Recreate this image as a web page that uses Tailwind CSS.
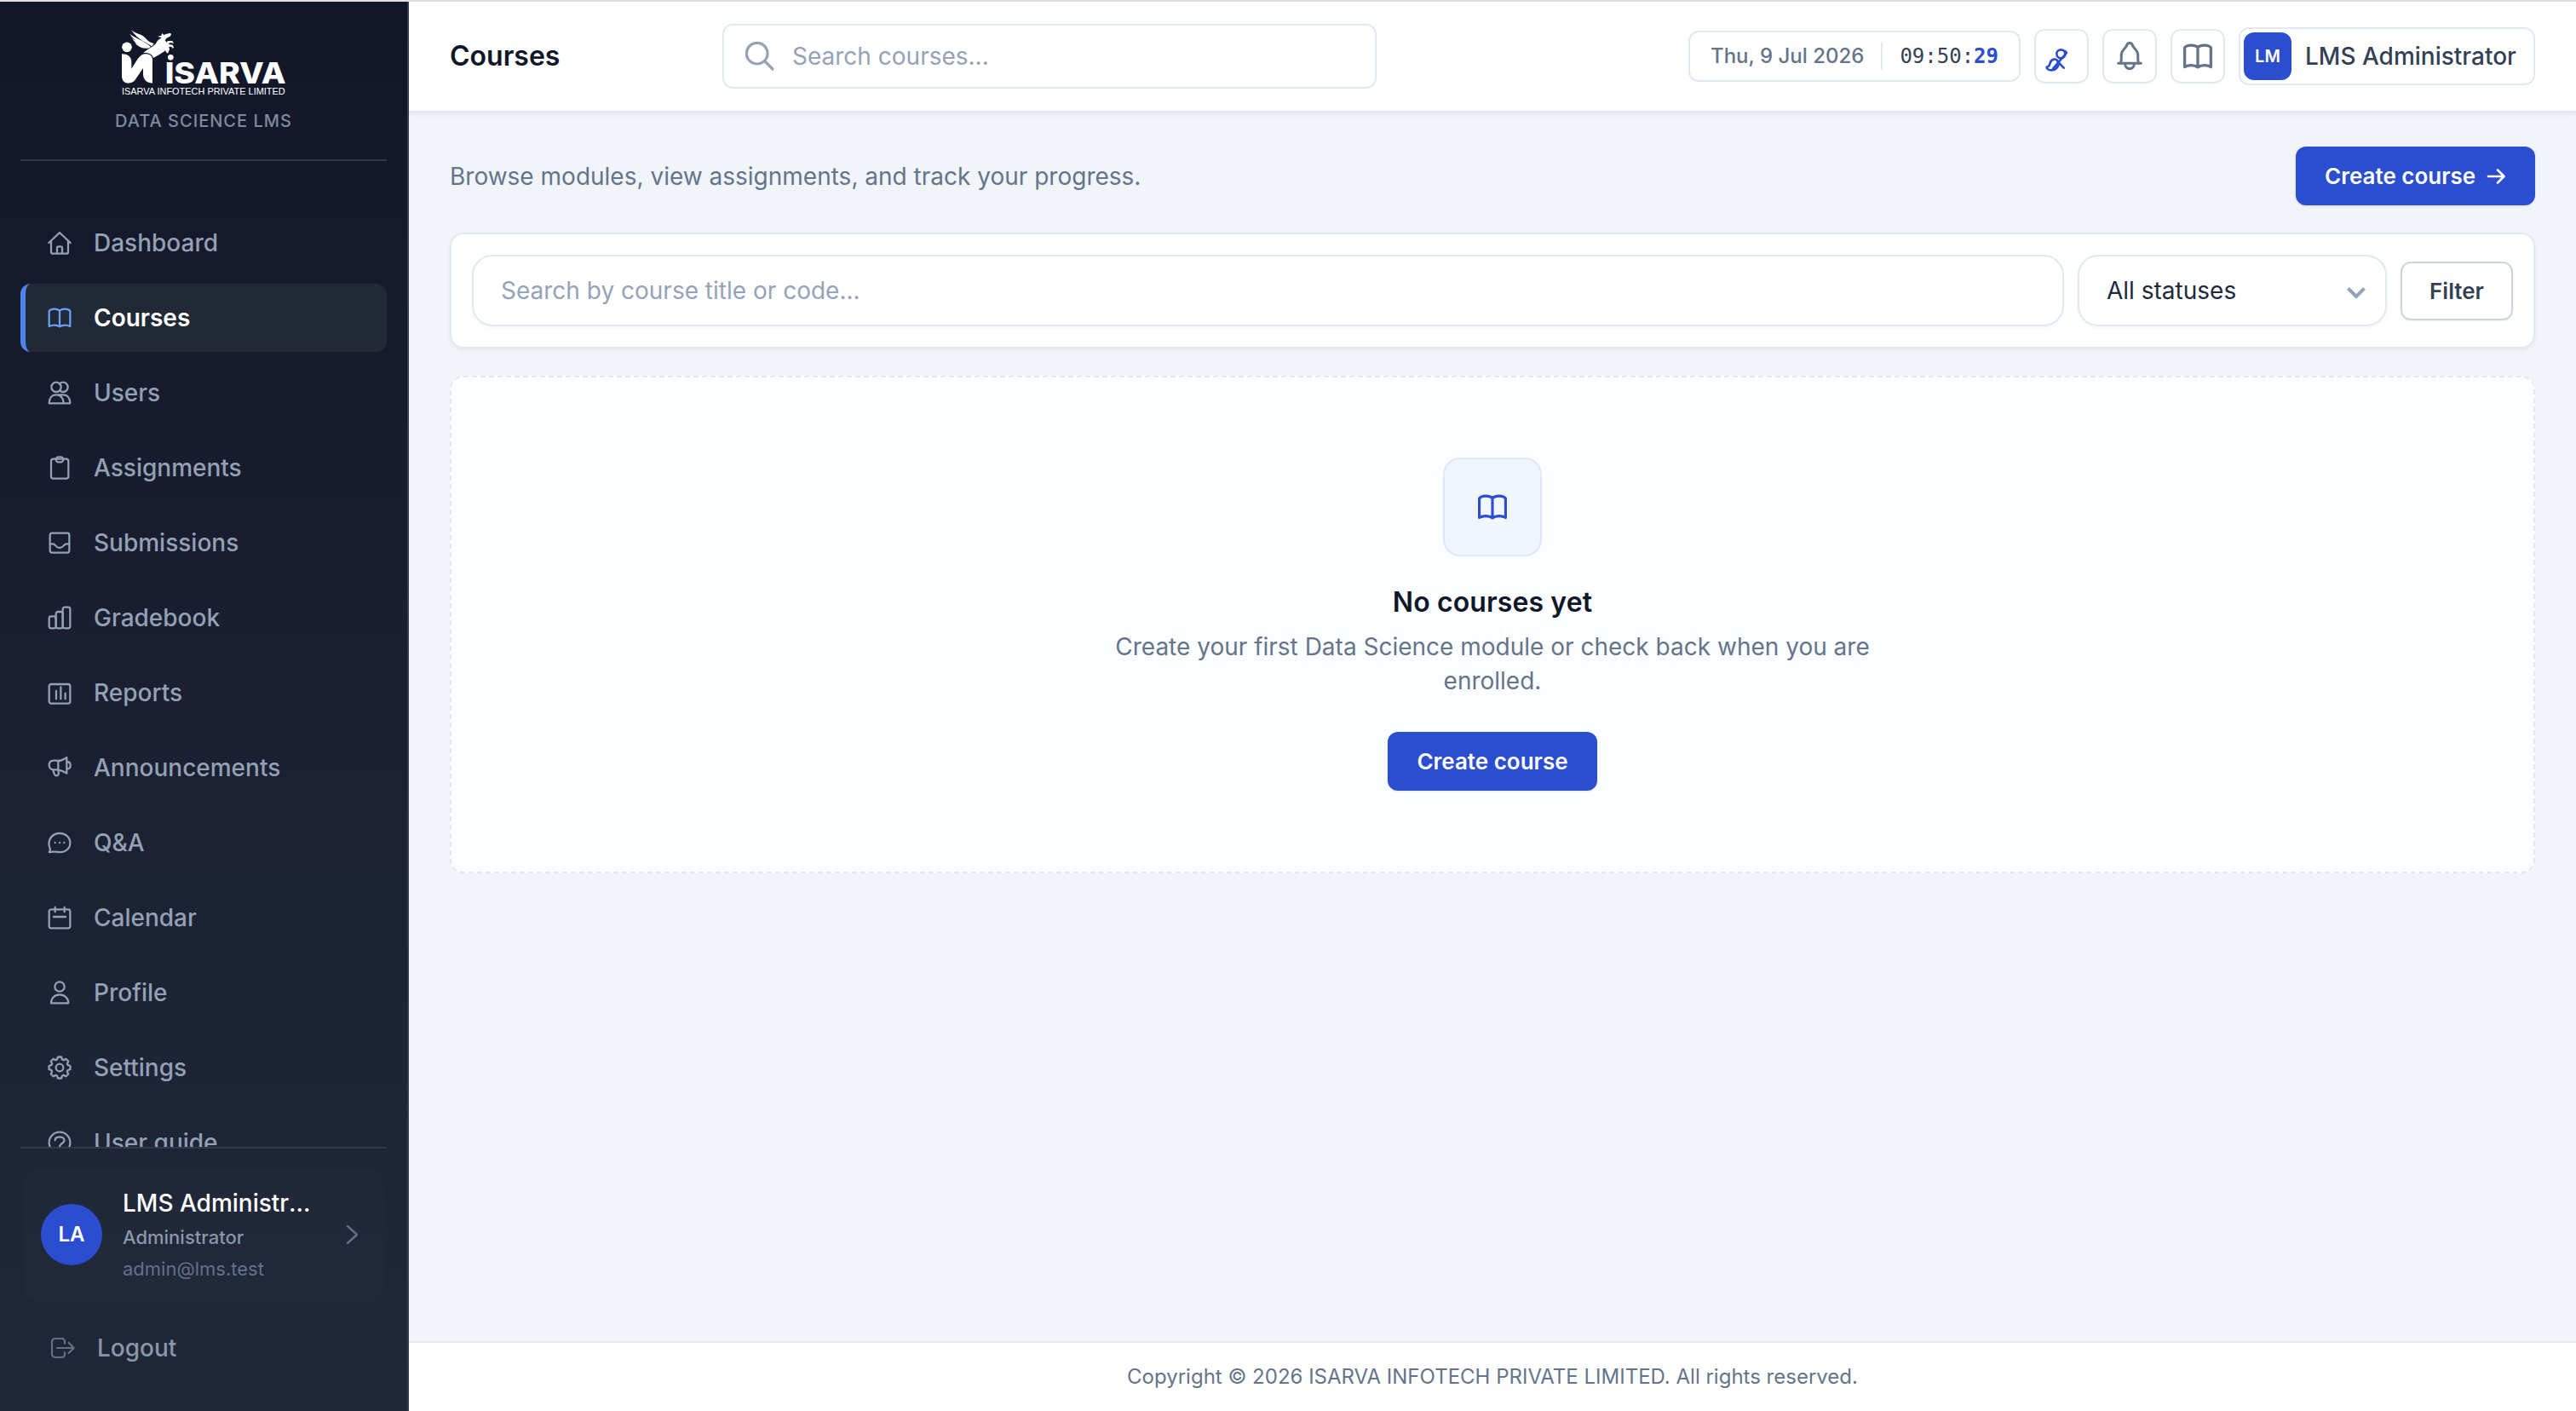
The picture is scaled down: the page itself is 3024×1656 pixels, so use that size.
<!DOCTYPE html>
<html lang="en">
<head>
    <meta charset="UTF-8">
    <meta name="viewport" content="width=device-width, initial-scale=1.0">
    <title>Courses - Data Science LMS</title>
    <script src="https://cdn.jsdelivr.net/npm/@tailwindcss/browser@4"></script>
</head>
<body class="flex h-screen flex-col overflow-hidden bg-[#f1f4f9] font-['Inter',sans-serif] text-[28px]">
    <div class="h-[2px] shrink-0 bg-[#e0e0e0]"></div>
    <div class="flex min-h-0 flex-1">

        <!-- Sidebar -->
        <aside class="flex w-[480px] shrink-0 flex-col border-r-2 border-[#333d4f] bg-linear-to-b from-[#111729] via-[#1a2032] to-[#1f2839] px-6">
            <div class="flex flex-col items-center border-b-2 border-[#303849] pt-8 pb-[35px]">
                <svg class="h-[78px] w-[192px] fill-white" viewBox="432 102 576 234">
                    <circle cx="450" cy="166" r="17.5"/>
                    <path d="M432 190C452 190 465 200 466 216V242L488 207C498 194 508 189 518 190C532 191 540 199 540 210V293C518 292 508 280 507 262V240L480 280C474 290 462 293 455 293C440 293 432 282 432 268Z"/>
                    <!-- winged horse: wing feathers, then body -->
                    <path d="M465 106C478 118 502 120 514 133C522 143 530 150 545 153L538 163C520 150 490 142 465 106Z"/>
                    <path d="M460 119C478 134 505 140 534 164L528 170C500 156 472 142 460 119Z"/>
                    <path d="M468 135C485 147 505 150 526 171L518 170C498 164 478 152 468 135Z"/>
                    <path d="M478 150C490 157 503 158 516 170C500 170 486 162 478 150Z"/>
                    <path d="M508 186C520 172 548 165 556 146C560 140 566 137 572 132L558 129L571 125L574 117L580 123L588 120L603 116L606 121L602 128L590 134L584 142L590 149L594 144L610 144L615 152L602 150L596 156L611 158L615 168L610 170L607 164L598 165L600 174L594 188L588 184L586 178C575 186 560 196 543 204C540 192 528 184 508 186Z"/>
                    <circle cx="604" cy="202" r="10"/>
                    <text x="584" y="293" font-size="101" font-weight="800" textLength="426" lengthAdjust="spacingAndGlyphs">ISARVA</text>
                    <text x="432" y="333" font-size="33" font-family="Liberation Sans" textLength="575" lengthAdjust="spacingAndGlyphs">ISARVA INFOTECH PRIVATE LIMITED</text>
                </svg>
                <p class="mt-5 text-[20px] leading-5 font-medium tracking-[1px] text-[#7f8a9d]">DATA SCIENCE LMS</p>
            </div>

            <nav id="nav" class="flex min-h-0 flex-1 flex-col gap-2 overflow-hidden pt-14"></nav>

            <div class="h-[310px] shrink-0 border-t-2 border-[#303a4b]">
                <div class="mx-1 mt-[23px] flex h-[156px] items-center rounded-2xl bg-white/[0.01] pl-5">
                    <div class="flex size-[72px] items-center justify-center rounded-full bg-[#2b4dcf] text-[24px] font-semibold text-white">LA</div>
                    <div class="ml-6 w-[226px]">
                        <p class="truncate leading-10 font-medium text-white">LMS Administrator</p>
                        <p class="text-[22px] leading-10 font-medium text-[#8b96a9]">Administrator</p>
                        <p class="text-[22px] leading-[34px] text-[#64708a]">admin@lms.test</p>
                    </div>
                    <svg class="ml-8 size-8 fill-none stroke-[#647085]" viewBox="0 0 32 32" stroke-width="2.4" stroke-linecap="round" stroke-linejoin="round"><path d="M6 6 17 16 6 26"/></svg>
                </div>
                <a class="mt-[15px] flex h-20 items-center gap-6 pl-[34px] font-medium text-[#8b96a9]">
                    <svg class="size-8 fill-none stroke-[#64708a]" viewBox="0 0 96 96" stroke-width="6.5" stroke-linecap="round" stroke-linejoin="round"><path d="M54 32V25a10 10 0 0 0-10-10H20A12 12 0 0 0 9 27V69A12 12 0 0 0 20 81H44a10 10 0 0 0 10-10V64M27 48H86M68 30 86 48 68 66"/></svg>
                    <span>Logout</span>
                </a>
            </div>
        </aside>

        <div class="flex min-w-0 flex-1 flex-col">
            <!-- Top bar -->
            <header class="flex h-[130px] shrink-0 items-center border-b-2 border-[#e2e8f0] bg-white px-12 shadow-[0_2px_6px_rgba(15,23,42,0.06)]">
                <h1 class="w-80 text-[32px] font-semibold text-[#0f172a]">Courses</h1>
                <label class="flex h-[76px] w-[768px] items-center gap-[18px] rounded-xl border-2 border-[#e2e8f0] pl-[22px] text-[#94a3b8]">
                    <svg class="size-10 fill-none stroke-[#94a3b8]" viewBox="0 0 40 40" stroke-width="3.2" stroke-linecap="round"><circle cx="16.7" cy="16.7" r="12.3"/><path d="M25.5 25.5 35 35"/></svg>
                    <span>Search courses...</span>
                </label>
                <div class="ml-auto flex items-center gap-4">
                    <div class="flex h-[60px] w-[390px] items-center rounded-xl border-2 border-[#e2e8f0] pr-6 pl-6 text-[24px] whitespace-nowrap text-[#64748b]">
                        <span class="font-medium">Thu, 9 Jul 2026</span>
                        <span class="mr-5 ml-auto h-8 w-[2px] bg-[#e2e8f0]"></span>
                        <span class="font-['DejaVu_Sans_Mono',monospace] text-[#334155]">09:50:<b class="font-bold text-[#2b4dcf]">29</b></span>
                    </div>
                    <button class="flex size-16 items-center justify-center rounded-xl border-2 border-[#e2e8f0]">
                        <svg class="size-10 fill-none stroke-[#2b4dcf]" viewBox="0 0 120 120" stroke-width="8" stroke-linecap="round" stroke-linejoin="round"><circle cx="58" cy="52" r="15"/><path d="M72 42 78 48 30 104M46 78 68 101M8 98C14 98 18 92 20 84C24 68 42 66 49 80C52 96 40 109 24 109C14 109 8 104 8 98Z"/></svg>
                    </button>
                    <button class="flex size-16 items-center justify-center rounded-xl border-2 border-[#e2e8f0]">
                        <svg class="size-10 fill-none stroke-[#64748b]" viewBox="0 0 120 120" stroke-width="9" stroke-linecap="round" stroke-linejoin="round"><path d="M20 85H100M28 85C33 75 30 62 31 52C33 38 46 32 50 22C52 11 68 11 70 22C74 32 87 38 89 52C90 62 87 75 92 85M44 88A16 16 0 0 0 76 88"/></svg>
                    </button>
                    <button class="flex size-16 items-center justify-center rounded-xl border-2 border-[#e2e8f0]">
                        <svg class="size-10 fill-none stroke-[#64748b]" viewBox="0 0 96 96" stroke-width="8" stroke-linecap="round" stroke-linejoin="round"><path d="M48 23C39 15 18 15 11 24V78C22 72 38 72 48 79C58 72 74 72 85 78V24C78 15 57 15 48 23ZV79"/></svg>
                    </button>
                    <div class="flex h-[68px] w-[348px] items-center rounded-xl border-2 border-[#e2e8f0] pl-1">
                        <div class="flex size-14 items-center justify-center rounded-xl bg-[#2b4dcf] text-[20px] font-semibold text-white">LM</div>
                        <span class="ml-4 font-medium text-[#334155]">LMS Administrator</span>
                    </div>
                </div>
            </header>

            <!-- Page content -->
            <main class="flex-1 px-12 pt-10">
                <div class="flex h-[69px] items-center justify-between">
                    <p class="text-[#64748b]">Browse modules, view assignments, and track your progress.</p>
                    <button class="flex h-[69px] w-[281px] items-center gap-3 rounded-xl bg-[#2b4dcf] pl-[34px] text-[26px] font-semibold text-white shadow-[0_1px_3px_rgba(15,23,42,0.1)]">
                        Create course
                        <svg class="size-6 fill-none stroke-white" viewBox="0 0 24 24" stroke-width="2.6" stroke-linecap="round" stroke-linejoin="round"><path d="M3 12H21M14 4.5 21.5 12 14 19.5"/></svg>
                    </button>
                </div>

                <!-- Filters -->
                <div class="mt-8 flex h-[136px] items-center gap-4 rounded-2xl border-2 border-[#e2e8f0] bg-white px-6 shadow-[0_2px_4px_rgba(15,23,42,0.05)]">
                    <div class="flex h-[84px] flex-1 items-center rounded-3xl border-2 border-[#e2e8f0] px-8 text-[#94a3b8] shadow-[0_2px_4px_rgba(15,23,42,0.04)]">Search by course title or code...</div>
                    <div class="flex h-[84px] w-[363px] items-center justify-between rounded-3xl border-2 border-[#e2e8f0] pr-5 pl-8 text-[#1e293b] shadow-[0_2px_4px_rgba(15,23,42,0.04)]">
                        <span>All statuses</span>
                        <svg class="mt-1 size-7 fill-none stroke-[#94a3b8]" viewBox="0 0 28 28" stroke-width="4"><path d="M4.500 9.500 14 19 23.500 9.500"/></svg>
                    </div>
                    <button class="h-[69px] w-[132px] rounded-xl border-2 border-[#cbd5e1] text-[26px] font-semibold text-[#334155] shadow-[0_1px_3px_rgba(15,23,42,0.06)]">Filter</button>
                </div>

                <!-- Empty state -->
                <div class="mt-8 flex h-[584px] flex-col items-center rounded-2xl border-2 border-dashed border-[#e2e8f0] bg-[#fcfdfe] pt-[94px]">
                    <div class="flex size-[116px] items-center justify-center rounded-[20px] border-2 border-[#dbe8fd] bg-[#f0f5fe]">
                        <svg class="size-10 fill-none stroke-[#2b4dcf]" viewBox="0 0 96 96" stroke-width="7.5" stroke-linecap="round" stroke-linejoin="round"><path d="M48 23C39 15 18 15 11 24V78C22 72 38 72 48 79C58 72 74 72 85 78V24C78 15 57 15 48 23ZV79"/></svg>
                    </div>
                    <h2 class="mt-8 text-[32px] leading-[44px] font-semibold tracking-[0.1px] text-[#0f172a]">No courses yet</h2>
                    <p class="mt-[10px] w-[896px] text-center leading-10 text-[#64748b]">Create your first Data Science module or check back when you are enrolled.</p>
                    <button class="mt-10 h-[69px] w-[246px] rounded-xl bg-[#2b4dcf] text-[26px] font-semibold text-white shadow-[0_1px_3px_rgba(15,23,42,0.1)]">Create course</button>
                </div>
            </main>

            <footer class="flex h-[82px] shrink-0 items-center justify-center border-t-2 border-[#e2e8f0] bg-white text-[24px] text-[#64748b]">
                Copyright © 2026 ISARVA INFOTECH PRIVATE LIMITED. All rights reserved.
            </footer>
        </div>
    </div>

    <script>
        const items = [
            ['Dashboard', '<path d="M10 48 48 12 86 48M18 42V80a6 6 0 0 0 6 6H72a6 6 0 0 0 6-6V42M39 86V66a5 5 0 0 1 5-5h8a5 5 0 0 1 5 5v20"/>'],
            ['Courses', '<path d="M48 23C39 15 18 15 11 24V78C22 72 38 72 48 79C58 72 74 72 85 78V24C78 15 57 15 48 23ZV79"/>'],
            ['Users', '<circle cx="36" cy="28" r="17"/><path d="M48 16A17 17 0 1 1 48 40M11 85C11 68 20 55 36 55S62 68 62 85ZM46 55H60C76 55 85 68 85 85H62"/>'],
            ['Assignments', '<rect x="18" y="17" width="61" height="69" rx="8"/><rect x="35" y="10" width="26" height="18" rx="9"/>'],
            ['Submissions', '<rect x="14" y="14" width="68" height="69" rx="7"/><path d="M14 52H24C34 52 34 66 48 66S62 52 72 52H82"/>'],
            ['Gradebook', '<rect x="11" y="43" width="24" height="42" rx="7"/><rect x="35" y="27" width="24" height="58" rx="7"/><rect x="59" y="11" width="26" height="74" rx="7"/>'],
            ['Reports', '<rect x="11" y="18" width="74" height="68" rx="7"/><path d="M36 42V70M52 28V70M68 50V70"/>'],
            ['Announcements', '<path d="M43 23H27C16 23 11 30 11 38S16 55 27 55H43ZM43 24C54 24 64 18 73 12V68C64 62 54 57 43 56M73 27C82 27 86 33 86 40S82 53 73 53M25 56C28 66 28 76 37 76C44 76 46 70 43 57"/>'],
            ['Q&amp;A', '<path d="M11 81C16 76 16 72 13 66C4 40 20 15 48 15C70 15 85 30 85 48C85 72 64 86 36 80C28 78 22 82 11 81Z"/><path d="M32 48h.1M48 48h.1M64 48h.1"/>'],
            ['Calendar', '<rect x="11" y="19" width="74" height="66" rx="7"/><path d="M32 11V28M65 11V28M27 45H69"/>'],
            ['Profile', '<circle cx="48" cy="27" r="17"/><path d="M18 85C18 68 30 55 48 55S79 68 79 85Z"/>'],
            ['Settings', '<circle cx="48" cy="48" r="13"/><path d="M85.500 42.100V53.900L76.500 57.300 74.700 61.600 78.700 70.300 70.300 78.700 61.600 74.700 57.300 76.500 53.900 85.500H42.100L38.700 76.500 34.400 74.700 25.700 78.700 17.300 70.300 21.300 61.600 19.500 57.300 10.500 53.900V42.100L19.500 38.700 21.300 34.400 17.300 25.700 25.700 17.300 34.400 21.300 38.700 19.500 42.100 10.500H53.900L57.300 19.500 61.600 21.300 70.300 17.300 78.700 25.700 74.700 34.400 76.500 38.700Z"/>'],
            ['User guide', '<circle cx="48" cy="48" r="37"/><path d="M32 40C32 30 40 28 48 28S66 32 64 42C62 52 48 52 48 62"/>']
        ];

        document.getElementById('nav').innerHTML = items.map(([label, icon]) => {
            const active = label === 'Courses';
            return `
                <a class="flex h-20 shrink-0 items-center gap-6 rounded-xl border-l-[6px] pl-6 ${active ? 'border-[#4f83f0] bg-[#212937] font-semibold text-white' : 'border-transparent font-medium text-[#94a0b4]'}">
                    <svg class="size-8 fill-none ${active ? 'stroke-[#6b9ff5]' : 'stroke-[#94a0b4]'}" viewBox="0 0 96 96" stroke-width="6.8" stroke-linecap="round" stroke-linejoin="round">${icon}</svg>
                    <span>${label}</span>
                </a>`;
        }).join('');
    </script>
</body>
</html>
